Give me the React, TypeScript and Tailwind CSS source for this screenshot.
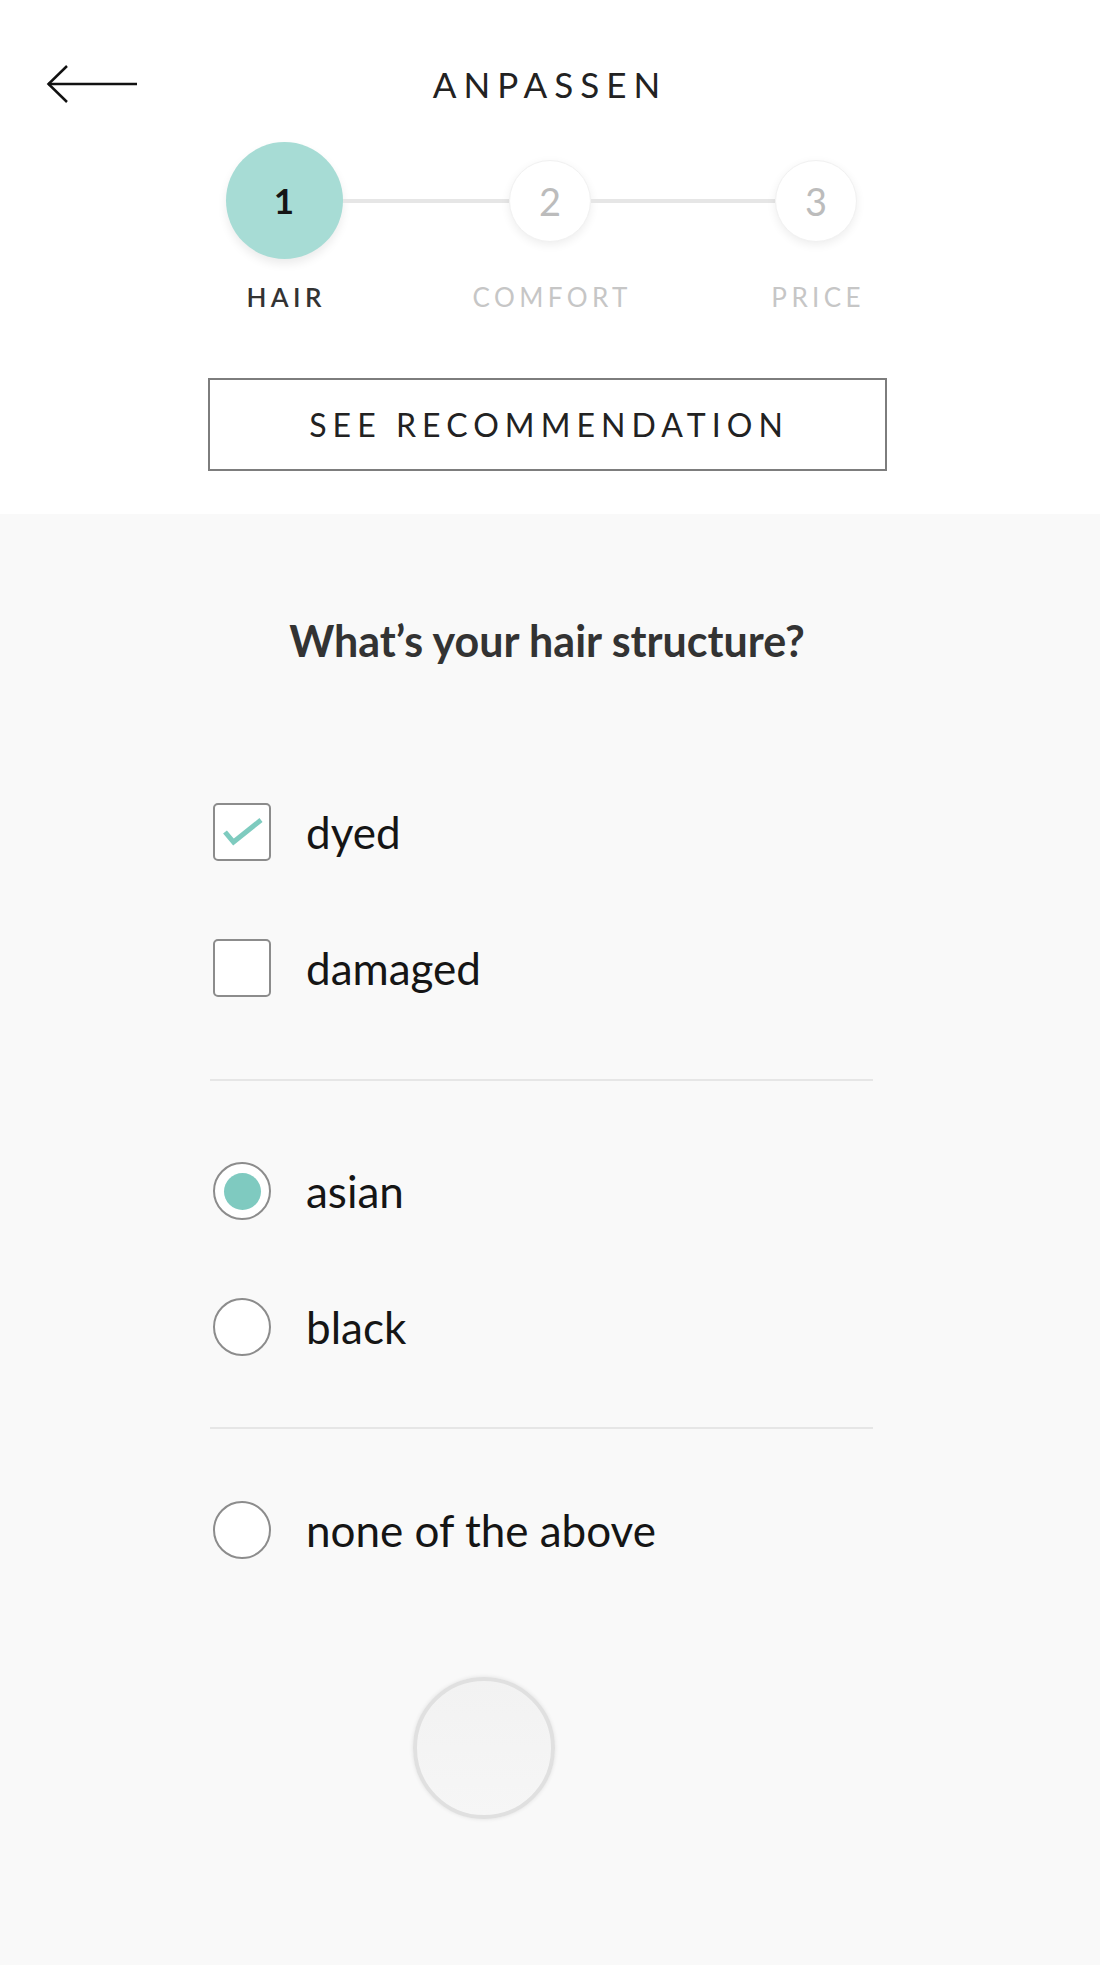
import React, { useState } from "react";

const font = { fontFamily: "Lato, 'Open Sans', sans-serif" };

const steps = [
  { n: 1, label: "HAIR" },
  { n: 2, label: "COMFORT" },
  { n: 3, label: "PRICE" },
];

const BackArrow = () => (
  <svg width="93" height="40" viewBox="0 0 93 40" fill="none" stroke="#111" strokeWidth="2.5">
    <path d="M2 20 H91" />
    <path d="M21 2 L2.5 20 L21 38" />
  </svg>
);

const Stepper: React.FC<{ active: number }> = ({ active }) => (
  <div className="mx-auto w-[798px] grid grid-cols-3">
    {steps.map((s, i) => (
      <div key={s.n} className="flex flex-col items-center">
        <div className="flex w-full h-[117px] items-center">
          <div className={`flex-1 h-[4px] ${i === 0 ? "" : "bg-[#e6e6e6]"}`} />
          {s.n === active ? (
            <div className="w-[117px] h-[117px] rounded-full bg-[#a7dcd5] shadow-[0_5px_10px_rgba(0,0,0,0.08)] flex items-center justify-center">
              <span className="text-[35px] font-bold text-[#151515] leading-none">{s.n}</span>
            </div>
          ) : (
            <div className="w-[82px] h-[82px] rounded-full bg-white border border-[#f1f1f1] shadow-[0_3px_10px_rgba(0,0,0,0.07)] flex items-center justify-center">
              <span className="text-[38px] text-[#bcbcbc] leading-none">{s.n}</span>
            </div>
          )}
          <div className={`flex-1 h-[4px] ${i === steps.length - 1 ? "" : "bg-[#e6e6e6]"}`} />
        </div>
        <div
          className={`mt-[23px] text-[26px] leading-[30px] tracking-[0.17em] pl-[0.17em] ${
            s.n === active ? "text-[#333] font-semibold" : "text-[#c6c6c6]"
          }`}
        >
          {s.label}
        </div>
      </div>
    ))}
  </div>
);

const Checkbox: React.FC<{ checked: boolean }> = ({ checked }) => (
  <div className="w-[58px] h-[58px] shrink-0 rounded-[5px] border-2 border-[#8c8c8c] bg-white">
    {checked && (
      <svg width="54" height="54" viewBox="0 0 54 54" fill="none" stroke="#7ecbbf" strokeWidth="5">
        <path d="M10 27 L18.5 37 L46 15" />
      </svg>
    )}
  </div>
);

const Radio: React.FC<{ checked: boolean }> = ({ checked }) => (
  <div className="w-[58px] h-[58px] shrink-0 rounded-full border-2 border-[#8c8c8c] bg-white flex items-center justify-center">
    {checked && <div className="w-[37px] h-[37px] rounded-full bg-[#7fcac0]" />}
  </div>
);

const Option: React.FC<{ label: string; control: React.ReactNode }> = ({ label, control }) => (
  <div className="flex items-center h-[58px] gap-[35px]">
    {control}
    <span className="text-[44px] leading-none text-[#151515]">{label}</span>
  </div>
);

export default function App() {
  const [dyed, setDyed] = useState(true);
  const [damaged, setDamaged] = useState(false);
  const [origin, setOrigin] = useState("asian");

  return (
    <div className="w-[1100px] min-h-[1965px] bg-[#f9f9f9]" style={font}>
      <header className="bg-white h-[514px] pt-[56px]">
        <div className="grid grid-cols-[1fr_auto_1fr] items-center h-[56px]">
          <div className="pl-[46px]">
            <BackArrow />
          </div>
          <h1 className="text-[35px] text-[#222] tracking-[0.2em]">ANPASSEN</h1>
          <div />
        </div>
        <div className="mt-[30px]">
          <Stepper active={1} />
        </div>
        <button className="block ml-[208px] mt-[66px] w-[679px] h-[93px] border-2 border-[#7d7d7d] bg-white text-[32px] text-[#222] tracking-[0.19em] pl-[0.1em]">
          SEE RECOMMENDATION
        </button>
      </header>

      <section className="pt-[103px]">
        <h2 className="text-center text-[43px] leading-[48px] font-bold text-[#333] pr-[6px]">
          What’s your hair structure?
        </h2>

        <div className="ml-[213px] w-[660px] mt-[138px]">
          <div onClick={() => setDyed(!dyed)}>
            <Option label="dyed" control={<Checkbox checked={dyed} />} />
          </div>
          <div className="mt-[78px]" onClick={() => setDamaged(!damaged)}>
            <Option label="damaged" control={<Checkbox checked={damaged} />} />
          </div>

          <div className="mt-[82px] h-[2px] bg-[#e6e6e6] -ml-[3px]" />

          <div className="mt-[81px]" onClick={() => setOrigin("asian")}>
            <Option label="asian" control={<Radio checked={origin === "asian"} />} />
          </div>
          <div className="mt-[78px]" onClick={() => setOrigin("black")}>
            <Option label="black" control={<Radio checked={origin === "black"} />} />
          </div>

          <div className="mt-[71px] h-[2px] bg-[#e6e6e6] -ml-[3px]" />

          <div className="mt-[72px]" onClick={() => setOrigin("none")}>
            <Option label="none of the above" control={<Radio checked={origin === "none"} />} />
          </div>
        </div>

        <div className="ml-[413px] mt-[118px] w-[142px] h-[142px] rounded-full border-[4px] border-[#e0e0e0] bg-gradient-to-b from-[#f2f2f2] to-[#f6f6f6] shadow-[0_0_4px_rgba(0,0,0,0.1)]" />
      </section>
    </div>
  );
}
